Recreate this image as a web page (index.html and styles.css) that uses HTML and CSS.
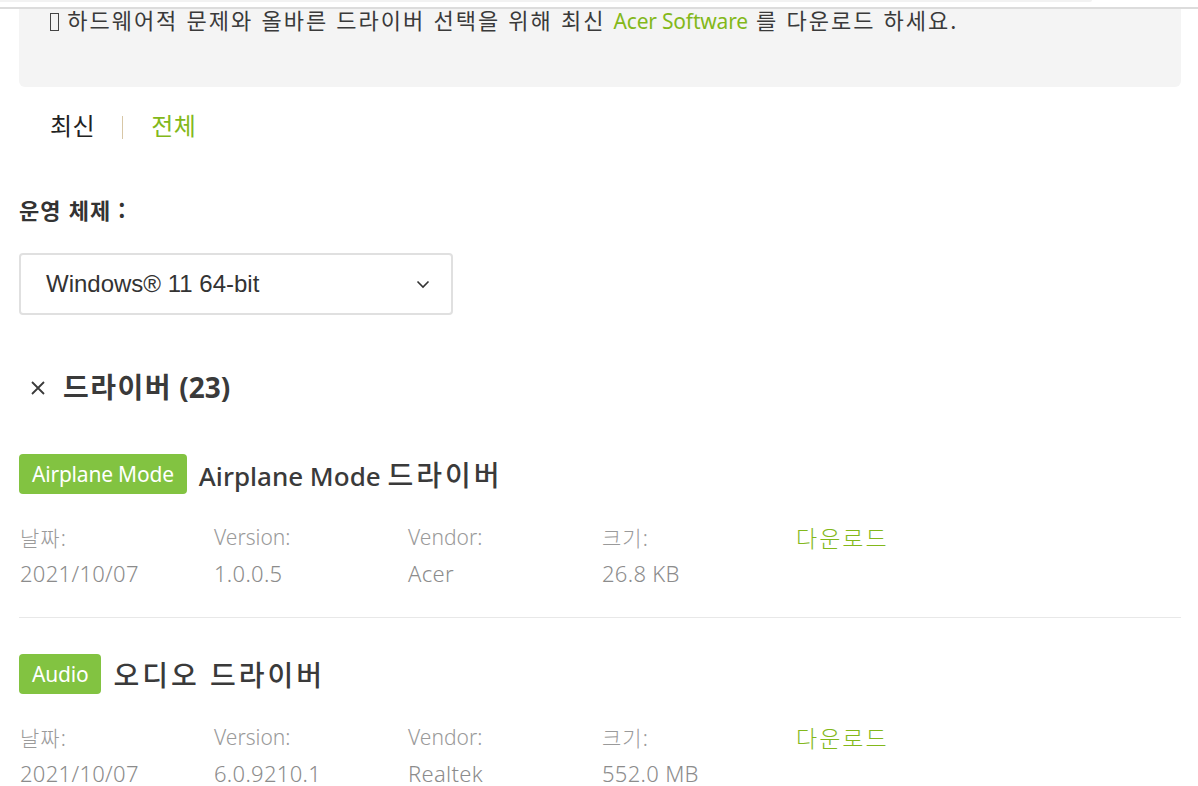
FILE: index.html
```html
<!DOCTYPE html>
<html lang="ko">
<head>
<meta charset="utf-8">
<title>드라이버</title>
<link rel="stylesheet" href="styles.css">
</head>
<body>
<header class="topbar"><div class="topbar-search"></div></header>
<main class="page">
  <div class="notice">
    <span class="tofu"></span> 하드웨어적 문제와 올바른 드라이버 선택을 위해 최신 <a class="green latin" href="#">Acer Software</a> <span class="tail">를 다운로드 하세요.</span>
  </div>

  <nav class="tabs">
    <span class="tab active">최신</span>
    <span class="tab-sep"></span>
    <span class="tab green">전체</span>
  </nav>

  <div class="os-label">운영 체제 :</div>
  <div class="select">
    <span class="select-text">Windows® 11 64-bit</span>
    <svg class="chev" width="14" height="10" viewBox="0 0 14 10"><path d="M1.5 2.5 L7 8 L12.5 2.5" fill="none" stroke="#333" stroke-width="1.6"/></svg>
  </div>

  <h2 class="section-title">
    <svg class="close" width="18" height="18" viewBox="0 0 18 18"><path d="M3 3 L15 15 M15 3 L3 15" stroke="#3a3a3a" stroke-width="1.8"/></svg>
    <span><span class="ko">드라이버</span> (23)</span>
  </h2>

  <section class="item">
    <div class="item-head">
      <span class="badge">Airplane Mode</span>
      <span class="item-title">Airplane Mode <span class="ko">드라이버</span></span>
    </div>
    <div class="meta">
      <span class="lbl ko">날짜:</span><span class="lbl">Version:</span><span class="lbl">Vendor:</span><span class="lbl ko">크기:</span><a class="dl" href="#">다운로드</a>
      <span class="val">2021/10/07</span><span class="val">1.0.0.5</span><span class="val">Acer</span><span class="val">26.8 KB</span><span></span>
    </div>
  </section>

  <section class="item">
    <div class="item-head">
      <span class="badge">Audio</span>
      <span class="item-title"><span class="ko">오디오 드라이버</span></span>
    </div>
    <div class="meta">
      <span class="lbl ko">날짜:</span><span class="lbl">Version:</span><span class="lbl">Vendor:</span><span class="lbl ko">크기:</span><a class="dl" href="#">다운로드</a>
      <span class="val">2021/10/07</span><span class="val">6.0.9210.1</span><span class="val">Realtek</span><span class="val">552.0 MB</span><span></span>
    </div>
  </section>
</main>
</body>
</html>
```
FILE: styles.css
```css
html, body {
  margin: 0;
  padding: 0;
  background: #fff;
  overflow: hidden;
}
body {
  font-family: "Noto Sans", "Noto Sans CJK KR", sans-serif;
  color: #333;
}
.topbar {
  position: fixed;
  top: 0;
  left: 0;
  right: 0;
  height: 7px;
  background: #fff;
  border-bottom: 2px solid #dcdcdc;
  z-index: 10;
}
.topbar-search {
  width: 1092px;
  height: 2px;
  background: #f2f2f2;
  border-bottom-right-radius: 6px;
}
.page {
  padding: 0 17px 40px 19px;
}
.green { color: #83b81a; text-decoration: none; }
.notice {
  margin-top: -20px;
  padding: 24px 31px 51px;
  background: #f4f4f4;
  border-radius: 6px;
  font-family: "Noto Sans CJK KR", sans-serif;
  font-size: 22px;
  letter-spacing: 2px;
  line-height: 30px;
  color: #3a3a3a;
}
.notice .latin {
  font-family: "Noto Sans", "Noto Sans CJK KR", sans-serif;
  font-size: 21px;
  letter-spacing: -0.2px;
}
.notice .tail { letter-spacing: 2px; }
.tofu {
  display: inline-block;
  width: 9px;
  height: 18px;
  border: 1px solid #444;
  vertical-align: -2px;
  box-sizing: border-box;
}
.tabs {
  margin-top: 22px;
  display: flex;
  align-items: center;
  height: 30px;
  padding-left: 31px;
  font-family: "Noto Sans CJK KR", sans-serif;
  font-size: 24px;
  letter-spacing: 0.5px;
}
.tab.active { color: #222; }
.tab-sep {
  width: 1px;
  height: 23px;
  background: #d8c7a6;
  margin: 6px 28px 0 27px;
}
.os-label {
  margin-top: 55px;
  height: 30px;
  line-height: 30px;
  font-family: "Noto Sans CJK KR", sans-serif;
  font-size: 22px;
  letter-spacing: 1px;
  font-weight: 700;
  color: #333;
}
.select {
  margin-top: 29px;
  width: 434px;
  height: 62px;
  box-sizing: border-box;
  border: 2px solid #e0e0e0;
  border-radius: 4px;
  display: flex;
  align-items: center;
  justify-content: space-between;
  padding: 0 21px 0 25px;
}
.select-text {
  font-family: "Liberation Sans", Arial, sans-serif;
  font-size: 24px;
  color: #333;
}
.section-title {
  margin: 51px 0 0;
  height: 40px;
  display: flex;
  align-items: center;
  font-size: 28px;
  font-weight: 700;
  color: #3a3a3a;
  padding-left: 10px;
}
.section-title .ko { font-size: 28px; letter-spacing: 1.5px; }
.close { margin-right: 16px; margin-top: 4px; }
.item {
  padding-top: 48px;
  padding-bottom: 26px;
  border-bottom: 1px solid #e8e8e8;
}
.item + .item { padding-top: 36px; border-bottom: none; }
.item-head {
  display: flex;
  align-items: center;
  height: 40px;
}
.badge {
  height: 40px;
  line-height: 40px;
  padding: 0 13px;
  background: #82c341;
  color: #fff;
  font-size: 21px;
  border-radius: 4px;
  letter-spacing: -0.2px;
}
.item-title {
  margin-left: 12px;
  font-size: 26px;
  font-weight: 500;
  color: #3a3a3a;
}
.item-title .ko { font-size: 28px; letter-spacing: 3px; }
.meta {
  margin-top: 25px;
  display: grid;
  grid-template-columns: repeat(5, 194px);
  grid-auto-rows: 36px;
  align-items: center;
  font-size: 21px;
  padding-left: 1px;
}
.lbl { color: #9a9a9a; font-weight: 300; }
.lbl.ko { letter-spacing: 1px; }
.val { color: #8c8c8c; font-weight: 300; font-size: 22px; letter-spacing: 0.3px; }
.dl {
  color: #83b81a;
  text-decoration: none;
  font-family: "Noto Sans CJK KR", sans-serif;
  font-size: 23px;
  letter-spacing: 2px;
  font-weight: 300;
}
```
